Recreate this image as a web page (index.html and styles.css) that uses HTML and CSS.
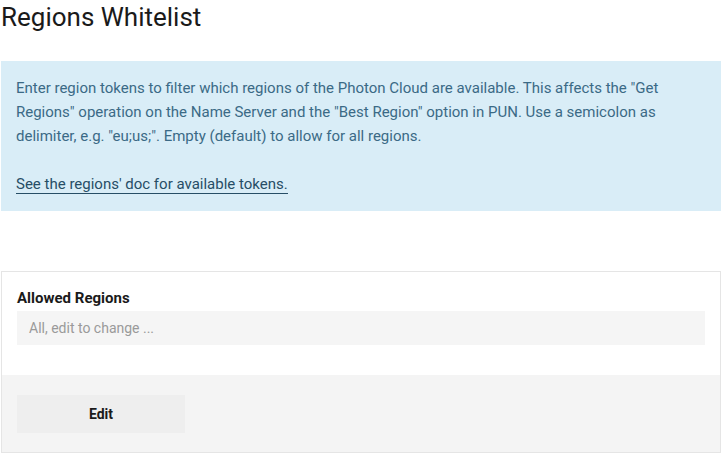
FILE: index.html
```html
<!DOCTYPE html>
<html>
<head>
<meta charset="utf-8">
<link rel="stylesheet" href="styles.css">
</head>
<body>
<div class="page">
  <h1 class="title">Regions Whitelist</h1>
  <div class="alert">
    <p class="alert-text">Enter region tokens to filter which regions of the Photon Cloud are available. This affects the "Get Regions" operation on the Name Server and the "Best Region" option in PUN. Use a semicolon as delimiter, e.g. "eu;us;". Empty (default) to allow for all regions.</p>
    <p class="alert-text"><a class="alert-link" href="#">See the regions' doc for available tokens.</a></p>
  </div>
  <div class="card">
    <div class="card-body">
      <label class="field-label">Allowed Regions</label>
      <div class="field-input">All, edit to change ...</div>
    </div>
    <div class="card-footer">
      <button class="btn">Edit</button>
    </div>
  </div>
</div>
</body>
</html>
```
FILE: styles.css
```css
html, body {
  margin: 0;
  padding: 0;
  background: #ffffff;
}
body {
  font-family: Roboto, "Liberation Sans", sans-serif;
  color: #222;
}
.page {
  width: 720px;
  margin-left: 1px;
}
.title {
  margin: 0;
  font-size: 26px;
  font-weight: 400;
  line-height: 34px;
  color: #1a1a1a;
}
.alert {
  margin-top: 27px;
  background: #d9edf7;
  padding: 15px 15px;
  color: #3b6a86;
  font-size: 15px;
  line-height: 24px;
}
.alert-text {
  margin: 0;
}
.alert-text + .alert-text {
  margin-top: 24px;
}
.alert-link {
  color: #274e66;
  text-decoration: none;
  border-bottom: 1px solid #274e66;
}
.card {
  margin-top: 60px;
  border: 1px solid #e5e5e5;
}
.card-body {
  background: #fff;
  padding: 16px 15px 30px 15px;
}
.field-label {
  display: block;
  font-size: 15px;
  font-weight: 700;
  line-height: 20px;
  margin-bottom: 3px;
  color: #1a1a1a;
}
.field-input {
  background: #f5f5f5;
  height: 34px;
  line-height: 34px;
  padding: 0 12px;
  font-size: 14px;
  color: #9a9a9a;
}
.card-footer {
  background: #f4f4f4;
  padding: 20px 15px 19px 15px;
}
.btn {
  display: block;
  width: 168px;
  height: 38px;
  border: 0;
  background: #eeeeee;
  font-family: Roboto, "Liberation Sans", sans-serif;
  font-size: 14px;
  font-weight: 700;
  color: #1a1a1a;
  padding: 0;
}
```
